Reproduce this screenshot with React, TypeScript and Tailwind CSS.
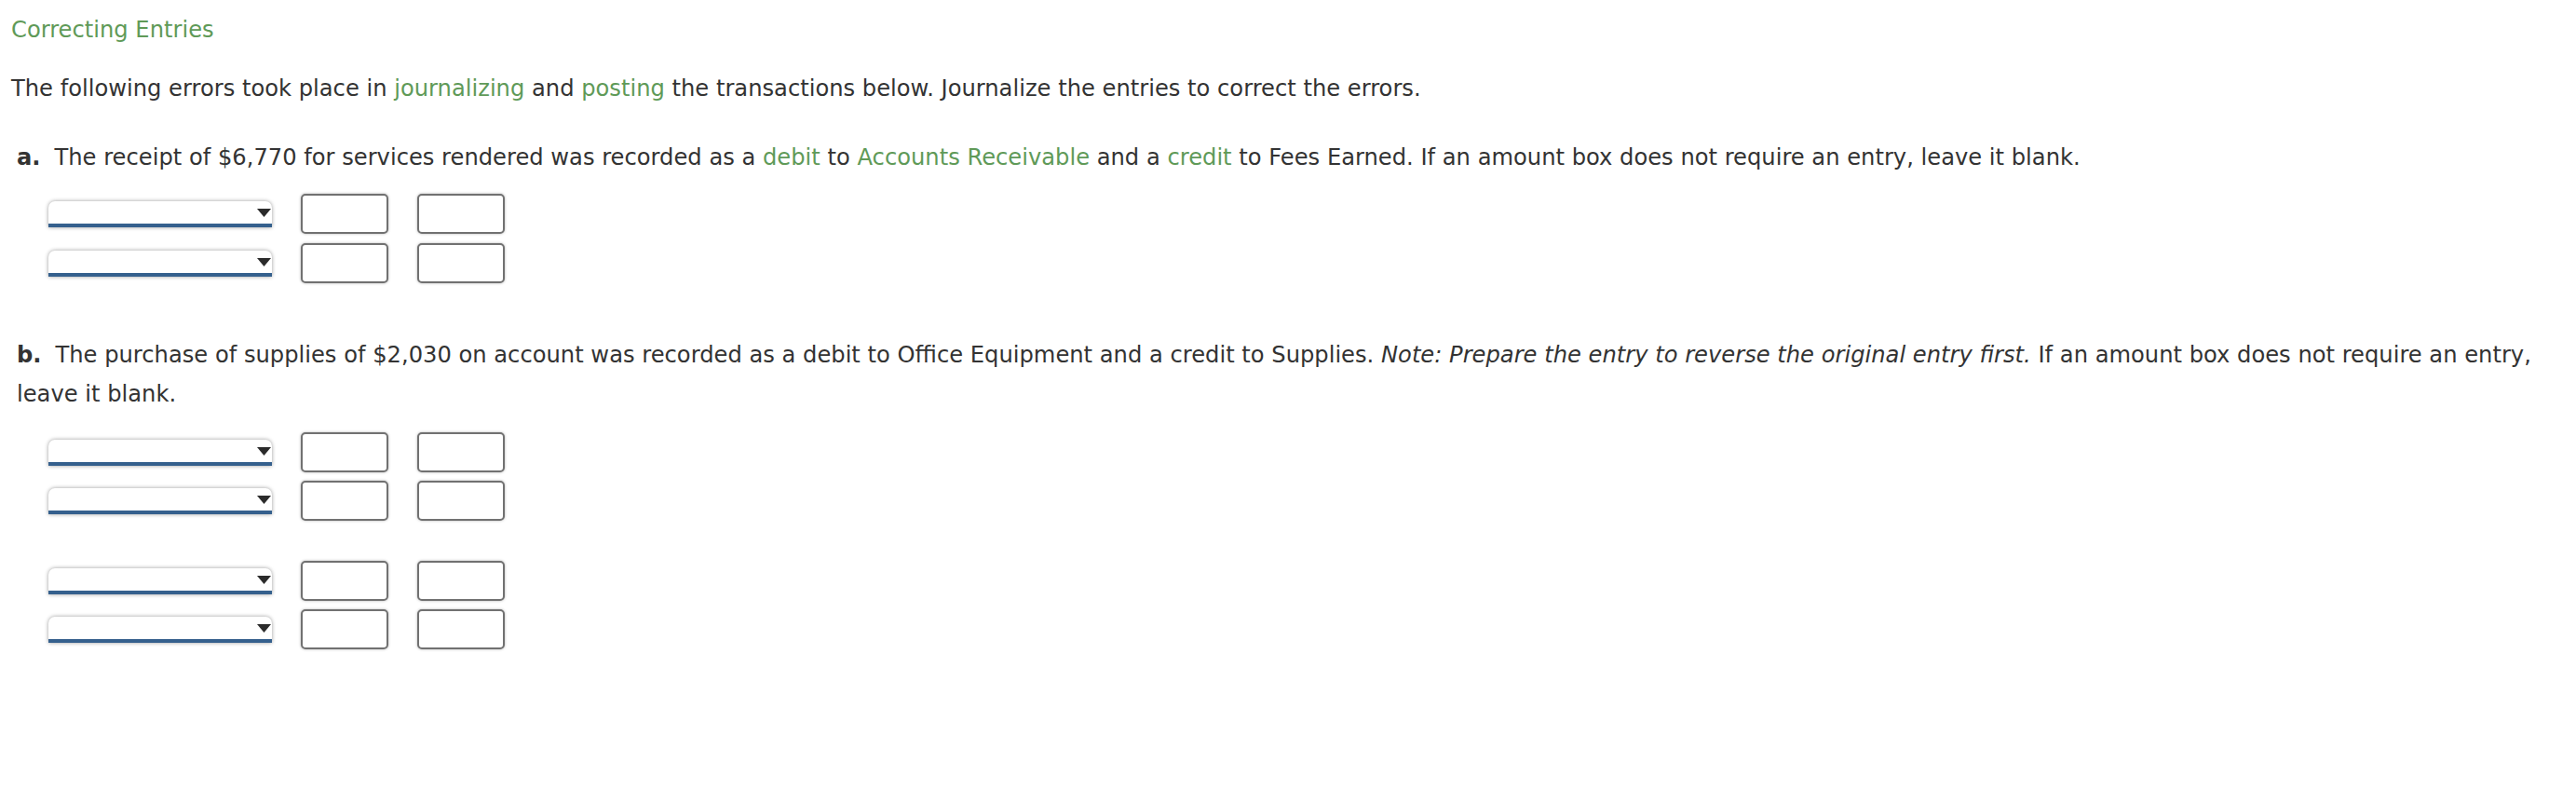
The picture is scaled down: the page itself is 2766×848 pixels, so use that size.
import React from "react";

const green = "text-[#5f9a58]";

function Pick(){
return (
<div className="relative w-[240px] h-[28px]">
<select className="appearance-none w-full h-full bg-white rounded-t-[7px] border-b-4 border-[#35608d] shadow-[0_0_4px_rgba(0,0,0,0.4)] outline-none" defaultValue="">
<option value=""></option>
</select>
<svg className="absolute right-[1px] top-[8px] pointer-events-none" width="15" height="9" viewBox="0 0 15 9">
<path d="M0 0 H15 L7.5 9 Z" fill="#2b2b2b" />
</svg>
</div>
);
}

function Amt(){
return <input type="text" className="w-[94px] h-[43px] bg-white border-2 border-[#717171] rounded-[5px] shadow-[0_0_3px_rgba(0,0,0,0.3)] outline-none" />;
}

function Row(){
return (
<div className="flex items-center gap-[31px] ml-[40px]">
<Pick/>
<Amt/>
<Amt/>
</div>
);
}

export default function App(){
return (
<div className="min-h-[848px] bg-white text-[#333] pl-[12px] pr-[30px] pt-[15px]" style={{fontFamily:'"DejaVu Sans", Verdana, sans-serif',fontSize:"24.2px"}}>
<div className={`${green} leading-[34px]`}>Correcting Entries</div>
<p className="mt-[29px] leading-[34px]">
The following errors took place in <span className={green}>journalizing</span> and <span className={green}>posting</span> the transactions below. Journalize the entries to correct the errors.
</p>

<p className="mt-[36px] pl-[6px] leading-[42px]">
<b className="mr-[15px]">a.</b>The receipt of $6,770 for services rendered was recorded as a <span className={green}>debit</span> to <span className={green}>Accounts Receivable</span> and a <span className={green}>credit</span> to Fees Earned. If an amount box does not require an entry, leave it blank.
</p>
<div className="mt-[18px] flex flex-col gap-[10px]">
<Row/>
<Row/>
</div>

<p className="mt-[56px] pl-[6px] leading-[42px]">
<b className="mr-[15px]">b.</b>The purchase of supplies of $2,030 on account was recorded as a debit to Office Equipment and a credit to Supplies. <i>Note: Prepare the entry to reverse the original entry first.</i> If an amount box does not require an entry, leave it blank.
</p>
<div className="mt-[20px] flex flex-col gap-[9px]">
<Row/>
<Row/>
</div>
<div className="mt-[43px] flex flex-col gap-[9px]">
<Row/>
<Row/>
</div>
</div>
);
}
